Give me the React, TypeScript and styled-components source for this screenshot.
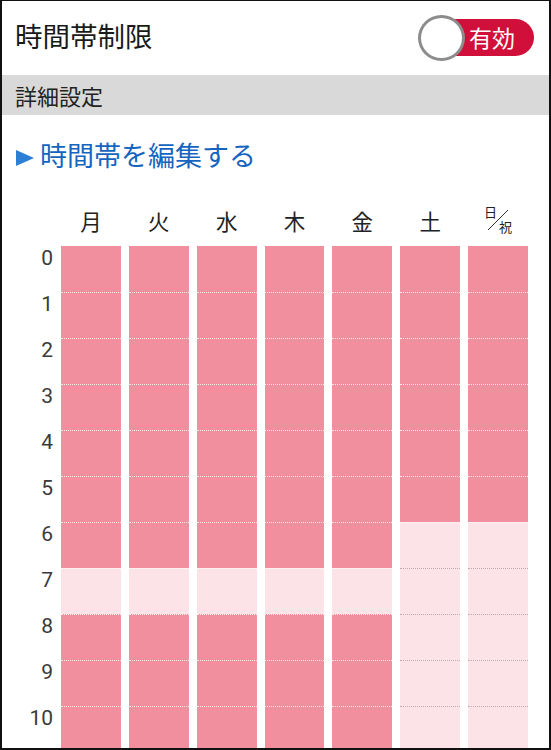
import styled, { createGlobalStyle } from "styled-components";

const GlobalStyle = createGlobalStyle`
  html, body {
    margin: 0;
    padding: 0;
    background: #fff;
  }
  * {
    box-sizing: border-box;
  }
  body {
    font-family: Roboto, "Noto Sans CJK JP", sans-serif;
    color: #222;
  }
`;

const ON = "#f18f9f";
const OFF = "#fbe3e8";

const Frame = styled.div`
  width: 551px;
  height: 750px;
  overflow: hidden;
  border: 2px solid #111;
  border-top-width: 1px;
  display: flex;
  flex-direction: column;
`;

const Header = styled.div`
  height: 74px;
  flex-shrink: 0;
  display: flex;
  align-items: center;
  justify-content: space-between;
  padding: 0 15px 1px 13px;
`;

const Title = styled.h1`
  margin: 0;
  font-size: 27.5px;
  font-weight: 400;
  color: #1a1a1a;
  line-height: 1;
`;

const Switch = styled.div`
  position: relative;
  display: flex;
  align-items: center;
  height: 46px;
  padding-left: 14px;
`;

const Track = styled.div`
  width: 102px;
  height: 37px;
  border-radius: 19px;
  background: #d0103a;
  color: #fff;
  font-size: 23px;
  display: flex;
  align-items: center;
  justify-content: center;
  padding-left: 18px;
  padding-bottom: 1px;
`;

const Knob = styled.div`
  position: absolute;
  left: 0;
  top: 0;
  width: 47px;
  height: 46px;
  border-radius: 50%;
  border: 3px solid #8c8c8c;
  background: #fff;
`;

const SectionBar = styled.div`
  height: 40px;
  flex-shrink: 0;
  background: #d9d9d9;
  display: flex;
  align-items: center;
  padding-left: 13px;
  font-size: 22px;
  color: #222;
`;

const LinkRow = styled.div`
  height: 82px;
  flex-shrink: 0;
  padding: 28px 0 0 14px;
`;

const EditLink = styled.a`
  display: inline-flex;
  align-items: center;
  gap: 6px;
  font-size: 27px;
  line-height: 28px;
  color: #1565c0;
  text-decoration: none;
  cursor: pointer;
`;

const Arrow = styled.span`
  width: 0;
  height: 0;
  border-top: 8px solid transparent;
  border-bottom: 8px solid transparent;
  border-left: 18px solid #2d7fd6;
  margin-top: 1px;
`;

const Chart = styled.div`
  display: grid;
  grid-template-columns: 51px repeat(7, 1fr);
  column-gap: 8px;
  padding-right: 21px;
`;

const DayLabel = styled.div`
  height: 49px;
  display: flex;
  align-items: center;
  justify-content: center;
  font-size: 21.5px;
  color: #222;
  padding-bottom: 2px;
`;

const Holiday = styled.div`
  width: 28px;
  height: 28px;
  display: grid;
  grid-template-columns: 1fr 1fr;
  grid-template-rows: 1fr 1fr;
  font-size: 13px;
  line-height: 1;
  color: #222;
  margin-top: -2px;
  background: linear-gradient(
      to bottom right,
      transparent calc(50% - 0.7px),
      #333 50%,
      transparent calc(50% + 0.7px)
    )
    center / 20px 20px no-repeat;
  span:first-child {
    grid-column: 1;
    grid-row: 1;
    align-self: start;
  }
  span:last-child {
    grid-column: 2;
    grid-row: 2;
    align-self: end;
    justify-self: end;
  }
`;

const HourColumn = styled.div`
  display: flex;
  flex-direction: column;
`;

const HourLabel = styled.div`
  height: 46px;
  flex-shrink: 0;
  text-align: right;
  font-size: 21px;
  line-height: 21px;
  padding-top: 2px;
  color: #3a3a3a;
`;

const DayColumn = styled.div`
  display: flex;
  flex-direction: column;
`;

const Cell = styled.div<{ $on: boolean; $line: "none" | "light" | "dark" }>`
  height: 46px;
  flex-shrink: 0;
  background: ${(p) => (p.$on ? ON : OFF)};
  border-top: ${(p) =>
    p.$line === "none"
      ? "none"
      : `1px dotted ${
          p.$line === "light" ? "rgba(255,255,255,0.8)" : "rgba(160,130,136,0.6)"
        }`};
`;

const days = ["月", "火", "水", "木", "金", "土", "日"];
// only the hours that fit in the view
const hours = Array.from({ length: 11 }, (_, i) => i);

const isOn = (day: number, hour: number) => {
  if (day >= 5) return hour < 6;
  return hour !== 7;
};

function App() {
  return (
    <>
      <GlobalStyle />
      <Frame>
        <Header>
          <Title>時間帯制限</Title>
          <Switch>
            <Track>有効</Track>
            <Knob />
          </Switch>
        </Header>
        <SectionBar>詳細設定</SectionBar>
        <LinkRow>
          <EditLink>
            <Arrow />
            時間帯を編集する
          </EditLink>
        </LinkRow>
        <Chart>
          <div />
          {days.map((d, i) =>
            i === 6 ? (
              <DayLabel key={d}>
                <Holiday>
                  <span>日</span>
                  <span>祝</span>
                </Holiday>
              </DayLabel>
            ) : (
              <DayLabel key={d}>{d}</DayLabel>
            )
          )}
          <HourColumn>
            {hours.map((h) => (
              <HourLabel key={h}>{h}</HourLabel>
            ))}
          </HourColumn>
          {days.map((d, di) => (
            <DayColumn key={d}>
              {hours.map((h) => {
                const on = isOn(di, h);
                const prevOn = h > 0 && isOn(di, h - 1);
                const line =
                  h === 0 ? "none" : on || prevOn ? "light" : "dark";
                return <Cell key={h} $on={on} $line={line} />;
              })}
            </DayColumn>
          ))}
        </Chart>
      </Frame>
    </>
  );
}

export default App;
